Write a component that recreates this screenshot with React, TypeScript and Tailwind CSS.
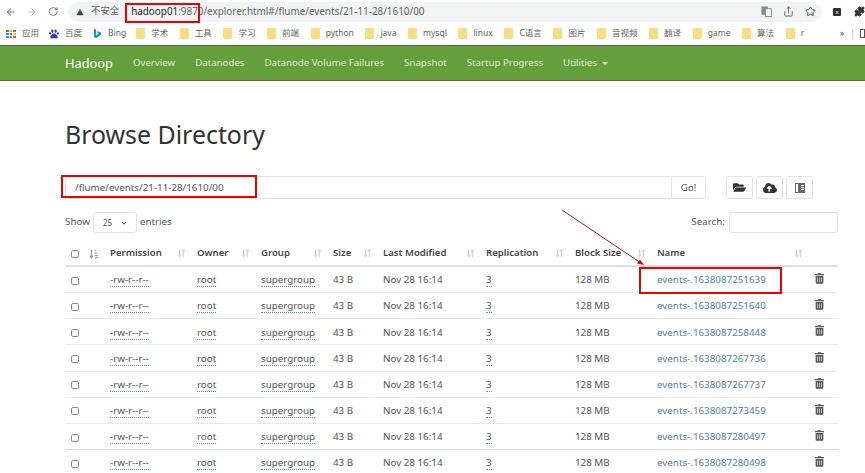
import { ArrowLeft, ArrowRight, RotateCw, Star, Share, Puzzle } from "lucide-react";
import { FaFolderOpen, FaCloudUploadAlt, FaTrashAlt, FaPaw } from "react-icons/fa";

const font = { fontFamily: '"Noto Sans", "Noto Sans CJK SC", sans-serif' };

const bookmarks = ["学术", "工具", "学习", "前端", "python", "java", "mysql", "linux", "C语言", "图片", "音视频", "翻译", "game", "算法", "r"];

const names = ["1638087251639", "1638087251640", "1638087258448", "1638087267736", "1638087267737", "1638087273459", "1638087280497", "1638087280498"];

const headers = [
  { label: "Permission", w: "w-[87px]", sort: "w-[76px]" },
  { label: "Owner", w: "w-[64px]", sort: "w-[53px]" },
  { label: "Group", w: "w-[72px]", sort: "w-[61px]" },
  { label: "Size", w: "w-[50px]", sort: "w-[39px]" },
  { label: "Last Modified", w: "w-[103px]", sort: "w-[92px]" },
  { label: "Replication", w: "w-[89px]", sort: "w-[78px]" },
  { label: "Block Size", w: "w-[82px]", sort: "w-[71px]" },
  { label: "Name", w: "w-[158px]", sort: "w-[146px]" },
];

function Folder() {
  return <div className="w-[9px] h-[11px] bg-[#fbdc80] rounded-[1px] shrink-0" />;
}

function SortIcon() {
  return (
    <svg viewBox="0 0 12 12" className="w-[9px] h-[10px]" fill="none" stroke="#d4d4d4" strokeWidth="1.6">
      <path d="M3.5 1v9M1.5 8l2 2.5 2-2.5M8.5 11V2M6.5 4l2-2.5 2 2.5" />
    </svg>
  );
}

function Apps() {
  const colors = ["#ea4335", "#fbbc05", "#34a853", "#4285f4", "#ea4335", "#fbbc05", "#34a853", "#4285f4", "#ea4335"];
  return (
    <div className="grid grid-cols-3 gap-[1px] w-[10px] shrink-0">
      {colors.map((c, i) => (
        <div key={i} className="h-[2px]" style={{ background: c }} />
      ))}
    </div>
  );
}

function Checkbox() {
  return <div className="w-[8px] h-[8px] border border-[#8f8f8f] rounded-[2px] bg-white" />;
}

function Row({ id, index }: { id: string; index: number }) {
  return (
    <div className={"flex items-center h-[26.17px] pt-[2px] text-[9.8px] text-[#555] border-b whitespace-nowrap " + (index === 6 ? "border-[#d9d9d9]" : "border-[#e9e9e9]")}>
      <div className="w-[45px] pl-[6px] flex items-center">
        <Checkbox />
      </div>
      <div className="w-[87px]">
        <span className="border-b border-dotted border-[#4a9ad8]">-rw-r--r--</span>
      </div>
      <div className="w-[64px]">
        <span className="border-b border-dotted border-[#4a9ad8]">root</span>
      </div>
      <div className="w-[72px]">
        <span className="border-b border-dotted border-[#4a9ad8]">supergroup</span>
      </div>
      <div className="w-[50px]">43 B</div>
      <div className="w-[103px]">Nov 28 16:14</div>
      <div className="w-[89px]">
        <span className="border-b border-dotted border-[#4a9ad8]">3</span>
      </div>
      <div className="w-[82px]">128 MB</div>
      <div className="w-[158px] text-[#5080b8]">events-.{id}</div>
      <FaTrashAlt className="text-[#555] w-[9px] h-[11px] -mt-[4px]" />
    </div>
  );
}

export default function App() {
  return (
    <div className="relative w-[865px] h-[473px] overflow-hidden bg-white" style={font}>
      {/* browser toolbar */}
      <div className="flex items-center h-[22px] pl-[5px] pt-[1px] text-[#5f6368]">
        <ArrowLeft size={12} strokeWidth={2} />
        <ArrowRight size={12} strokeWidth={2} className="ml-[10px] text-[#b5b5b5]" />
        <RotateCw size={11} strokeWidth={2} className="ml-[10px]" />
        <div className="ml-[10px] w-[754px] h-[20px] shrink-0 bg-[#f1f3f4] rounded-full flex items-center pl-[8px] text-[9.9px] whitespace-nowrap">
          <svg viewBox="0 0 12 12" className="w-[8px] h-[8px] shrink-0" fill="#444">
            <path d="M6 1l5.5 10h-11z" />
          </svg>
          <span className="ml-[7px] text-[#5f6368] text-[9.4px]">不安全</span>
          <span className="ml-[12px] text-[#202124]">hadoop01</span>
          <span className="text-[#5f6368]">:9870/explorer.html#/flume/events/21-11-28/1610/00</span>
          <div className="ml-auto mr-[6px] flex items-center gap-[11px]">
            <svg viewBox="0 0 12 12" className="w-[11px] h-[11px]">
              <rect x="0.5" y="0.5" width="7" height="9" fill="#8a8a8a" />
              <rect x="5" y="3" width="6.5" height="8.5" fill="#f1f3f4" stroke="#8a8a8a" />
            </svg>
            <Share size={11} />
            <Star size={11} className="text-[#444]" />
          </div>
        </div>
        <div className="ml-[11px] w-[8px] h-[8px] shrink-0 bg-[#26323f] rounded-[1px] flex items-center justify-center text-white text-[6px] leading-none">x</div>
        <Puzzle size={11} className="ml-[13px] shrink-0 text-[#333] fill-[#333]" />
      </div>

      {/* bookmarks */}
      <div className="flex items-center h-[23px] pl-[6px] text-[8.5px] text-[#5f6368] whitespace-nowrap">
        <div className="flex items-center gap-[6px]">
          <Apps />
          <span>应用</span>
        </div>
        <div className="ml-[10px] flex items-center gap-[6px]">
          <FaPaw className="text-[#2932e1] text-[10px]" />
          <span>百度</span>
        </div>
        <div className="ml-[12px] flex items-center gap-[7px]">
          <svg viewBox="0 0 8 11" className="w-[7px] h-[11px]" fill="#1a8fd8">
            <path d="M0 0l2.4.8v6.6l3-1.7-1.3-.7-.9-2.2L8 4.3v2.6L2.4 11 0 9.6z" />
          </svg>
          <span>Bing</span>
        </div>
        <div className="ml-[10px] flex items-center gap-[11.6px]">
          {bookmarks.map((b) => (
            <div key={b} className="flex items-center gap-[6px]">
              <Folder />
              <span>{b}</span>
            </div>
          ))}
        </div>
        <span className="ml-auto mr-[8px] text-[#444]">»</span>
        <div className="w-px h-[10px] bg-[#ccc] mr-[7px]" />
        <div className="w-[5px] h-[9px] border border-[#555]" />
      </div>

      {/* navbar */}
      <nav className="flex items-center h-[36px] pt-[1px] bg-[#659f3b] border-y border-[#4f6f3a] pl-[65px] text-[9.7px] text-[#dcebcf] whitespace-nowrap">
        <span className="text-[12.8px] text-white mr-[20px]">Hadoop</span>
        <span className="mr-[20px]">Overview</span>
        <span className="mr-[20px]">Datanodes</span>
        <span className="mr-[20px]">Datanode Volume Failures</span>
        <span className="mr-[20px]">Snapshot</span>
        <span className="mr-[20px]">Startup Progress</span>
        <span>Utilities</span>
        <span className="ml-[5px] border-x-[3px] border-t-[3px] border-x-transparent border-t-[#dcebcf]" />
      </nav>

      <main className="pl-[65px] pr-[27px]">
        <h1 className="text-[24.9px] leading-[32px] mt-[37px] text-[#333]">Browse Directory</h1>

        {/* path input */}
        <div className="flex items-center mt-[26px]">
          <div className="w-[607px] h-[23px] pt-[1px] border border-[#e3e3e3] rounded-l-[3px] flex items-center pl-[9px] text-[9.8px] text-[#555]">
            /flume/events/21-11-28/1610/00
          </div>
          <div className="w-[34px] h-[23px] pt-[1px] border border-l-0 border-[#e3e3e3] rounded-r-[3px] flex items-center justify-center text-[9.8px] text-[#555]">
            Go!
          </div>
          <div className="ml-[20px] flex gap-[3px]">
            <div className="w-[27px] h-[23px] border border-[#e3e3e3] rounded-[3px] flex items-center justify-center">
              <FaFolderOpen className="text-[#333] text-[13px]" />
            </div>
            <div className="w-[27px] h-[23px] border border-[#e3e3e3] rounded-[3px] flex items-center justify-center">
              <FaCloudUploadAlt className="text-[#333] text-[14px]" />
            </div>
            <div className="w-[27px] h-[23px] border border-[#e3e3e3] rounded-[3px] flex items-center justify-center">
              <svg viewBox="0 0 10 10" className="w-[10px] h-[10px]" fill="#666">
                <path d="M0 0h10v10H0zM1 1v8h2V1zM6 2v1h3V2zM6 4v1h3V4zM6 6v1h3V6z" fillRule="evenodd" />
              </svg>
            </div>
          </div>
        </div>

        {/* show entries + search */}
        <div className="flex items-center justify-between mt-[13px] h-[21px] text-[9.8px] text-[#555]">
          <div className="flex items-center gap-[3px]">
            <span>Show</span>
            <div className="w-[44px] h-[21px] border border-[#e3e3e3] rounded-[3px] flex items-center justify-between px-[9px] text-[8px]">
              <span>25</span>
              <svg viewBox="0 0 8 5" className="w-[6px] h-[4px]" fill="none" stroke="#333" strokeWidth="1.3">
                <path d="M1 1l3 3 3-3" />
              </svg>
            </div>
            <span>entries</span>
          </div>
          <div className="flex items-center gap-[4px]">
            <span>Search:</span>
            <div className="w-[109px] h-[21px] border border-[#e3e3e3] rounded-[3px]" />
          </div>
        </div>

        {/* table */}
        <div className="mt-[7px]">
          <div className="flex items-center h-[27px] pt-[2px] border-b-2 border-[#dedede] text-[9.6px] font-semibold text-[#444] whitespace-nowrap">
            <div className="w-[45px] pl-[6px] flex items-center gap-[10px]">
              <Checkbox />
              <svg viewBox="0 0 12 12" className="w-[10px] h-[10px]" fill="none" stroke="#999" strokeWidth="1.4">
                <path d="M3 1v9M1 8l2 2.5 2-2.5M7 2h1.5M7 5h2.5M7 8h3.5M7 10.5h4.5" />
              </svg>
            </div>
            {headers.map((h) => (
              <div key={h.label} className={h.w}>
                <div className={h.sort + " flex items-center justify-between"}>
                  <span>{h.label}</span>
                  <SortIcon />
                </div>
              </div>
            ))}
          </div>
          {names.map((n, i) => (
            <Row key={n} id={n} index={i} />
          ))}
        </div>
      </main>

      {/* red annotations */}
      <div className="absolute left-[125px] top-[3px] w-[75px] h-[20px] border-2 border-[#f00000]" />
      <div className="absolute left-[61px] top-[175px] w-[196px] h-[23px] border-2 border-[#f00000]" />
      <div className="absolute left-[639px] top-[267px] w-[143px] h-[27px] border-2 border-[#f00000]" />
      <svg className="absolute left-[555px] top-[205px] w-[95px] h-[65px]" viewBox="0 0 95 65" fill="none">
        <path d="M7 5L86 58" stroke="#f00000" strokeWidth="1" />
        <path d="M89 60l-7-1.5 3-4z" fill="#f00000" />
      </svg>
    </div>
  );
}
